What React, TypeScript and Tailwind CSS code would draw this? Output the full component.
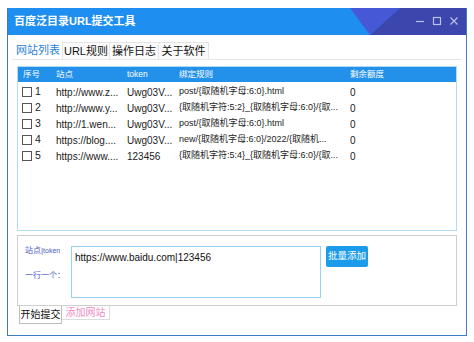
import React from "react";

const rows = [
  { no: "1", site: "http://www.z...", token: "Uwg03V...", rule: "post/{取随机字母:6:0}.html", left: "0" },
  { no: "2", site: "http://www.y...", token: "Uwg03V...", rule: "{取随机字符:5:2}_{取随机字母:6:0}/{取...", left: "0" },
  { no: "3", site: "http://1.wen...", token: "Uwg03V...", rule: "post/{取随机字母:6:0}.html", left: "0" },
  { no: "4", site: "https://blog....", token: "Uwg03V...", rule: "new/{取随机字母:6:0}/2022/{取随机...", left: "0" },
  { no: "5", site: "https://www....", token: "123456", rule: "{取随机字符:5:4}_{取随机字母:6:0}/{取...", left: "0" },
];

const font = { fontFamily: '"Liberation Sans", "Noto Sans CJK SC", sans-serif' };

const TitleBar = () => (
  <div className="relative flex h-[27px] items-center bg-[#1e8ff0] pl-[6px]">
    <span className="text-[11px] font-bold text-white">百度泛目录URL提交工具</span>
    <svg className="absolute right-0 top-0" width="116" height="27" viewBox="0 0 116 27">
      <polygon points="0,0 50,0 20,27" fill="#4658d6" />
      <polygon points="50,0 116,0 116,27 20,27" fill="#3b47ad" />
    </svg>
    <div className="absolute right-[7px] top-[8px] flex items-center gap-[7px]">
      <svg width="10" height="10" viewBox="0 0 10 10">
        <line x1="1" y1="5.5" x2="9" y2="5.5" stroke="#b9c0ea" strokeWidth="1.2" />
      </svg>
      <svg width="10" height="10" viewBox="0 0 10 10">
        <rect x="1.5" y="1.5" width="7" height="7" fill="none" stroke="#b9c0ea" strokeWidth="1.2" />
      </svg>
      <svg width="10" height="10" viewBox="0 0 10 10">
        <path d="M1.5 1.5 L8.5 8.5 M8.5 1.5 L1.5 8.5" stroke="#b9c0ea" strokeWidth="1.2" />
      </svg>
    </div>
  </div>
);

const Tabs = () => (
  <div className="flex h-[17px] items-stretch whitespace-nowrap pl-[6px] text-[11px] leading-none">
    <div className="flex w-[48px] items-center justify-center bg-white text-[#2a7fd6]">网站列表</div>
    <div className="flex w-[48px] items-center justify-center border border-b-0 border-[#e4e4e4] bg-[#fbfbfb] text-[#111]">URL规则</div>
    <div className="flex w-[49px] items-center justify-center border border-b-0 border-l-0 border-[#e4e4e4] bg-[#fbfbfb] text-[#111]">操作日志</div>
    <div className="flex w-[50px] items-center justify-center border border-b-0 border-l-0 border-[#e4e4e4] bg-[#fbfbfb] text-[#111]">关于软件</div>
  </div>
);

const Checkbox = () => <span className="inline-block h-[10px] w-[10px] border border-[#555] bg-white" />;

const List = () => (
  <div className="mx-[9px] mt-[6px] h-[165px] border border-[#b3dbf4] bg-white">
    <div className="flex h-[15px] items-center whitespace-nowrap bg-[#2391ea] text-[8.5px] text-white">
      <div className="w-[38px] pl-[5px]">序号</div>
      <div className="w-[71px]">站点</div>
      <div className="w-[52px]">token</div>
      <div className="w-[171px]">绑定规则</div>
      <div className="flex-1">剩余额度</div>
    </div>
    <div className="pt-[2px] text-[10px] text-[#222]">
      {rows.map((r) => (
        <div key={r.no} className="flex h-[16px] items-center whitespace-nowrap">
          <div className="flex w-[38px] items-center gap-[3px] pl-[4px]">
            <Checkbox />
            <span className="text-[10.5px]">{r.no}</span>
          </div>
          <div className="w-[71px] overflow-hidden">{r.site}</div>
          <div className="w-[52px] overflow-hidden">{r.token}</div>
          <div className="w-[171px] overflow-hidden text-[9px]">{r.rule}</div>
          <div className="flex-1">{r.left}</div>
        </div>
      ))}
    </div>
  </div>
);

const AddPanel = () => (
  <div className="mx-[9px] mt-[4px] flex flex-col">
    <div className="flex h-[71px] border border-[#cfcfcf] bg-white pl-[7px] pt-[10px]">
      <div className="flex w-[46px] flex-col whitespace-nowrap text-[8px] text-[#4a5ec8]">
        <div className="-mt-[1px]">
          站点|<span className="text-[7px]">token</span>
        </div>
        <div className="mt-[13px]">一行一个：</div>
      </div>
      <div className="h-[52px] w-[250px] border border-[#94d2f0] px-[3px] pt-[3px] text-[10px] text-[#111]">
        https://www.baidu.com|123456
      </div>
      <div className="ml-[5px] flex h-[21px] w-[42px] items-center justify-center rounded-[2px] bg-[#1b9bea] text-[9.5px] text-white">
        批量添加
      </div>
    </div>
    <div className="flex h-[19px] items-start whitespace-nowrap text-[10px] leading-none">
      <div className="ml-[2px] flex h-[18px] w-[43px] items-center justify-center border border-t-0 border-[#bdbdbd] bg-white text-[#111]">
        开始提交
      </div>
      <div className="flex h-[14px] w-[48px] items-center justify-center border border-l-0 border-t-0 border-[#dcdcdc] bg-white text-[#f08cc4]">
        添加网站
      </div>
    </div>
  </div>
);

export default function App() {
  return (
    <div className="h-[342px] w-[474px] bg-white pl-[7px] pt-[8px]" style={font}>
      <div className="flex h-[328px] w-[460px] flex-col border border-t-0 border-[#3d7cc6] bg-white">
        <TitleBar />
        <div className="mt-[7px]">
          <Tabs />
        </div>
        <div className="mx-[4px] border-t border-[#e6e6e6]" />
        <List />
        <AddPanel />
      </div>
    </div>
  );
}
